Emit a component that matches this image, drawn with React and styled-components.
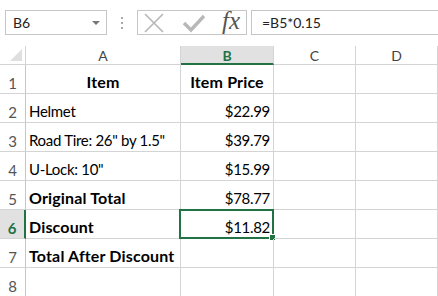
import React from 'react';
import styled, { createGlobalStyle } from 'styled-components';

const GREEN = '#217346';
const LINE = '#d4d4d4';

const Global = createGlobalStyle`
  html, body { margin: 0; padding: 0; background: #fff; overflow: hidden; }
  body { font-family: Lato, "Open Sans", sans-serif; }
`;

const Page = styled.div`
  width: 438px;
  height: 296px;
  overflow: hidden;
  background: #fff;
`;

const FormulaBar = styled.div`
  display: flex;
  align-items: center;
  height: 25px;
  padding: 10px 0 11px 5px;
`;

const NameBox = styled.div`
  box-sizing: border-box;
  width: 102px;
  height: 25px;
  border: 1px solid #c6c6c6;
  display: flex;
  align-items: center;
  justify-content: space-between;
  padding: 0 6px 0 7px;
  font-size: 14px;
  color: #222;
`;

const Caret = styled.span`
  width: 0;
  height: 0;
  border-left: 4px solid transparent;
  border-right: 4px solid transparent;
  border-top: 4px solid #777;
  margin-top: 1px;
`;

const Grip = styled.div`
  width: 30px;
  display: flex;
  justify-content: center;
  svg { display: block; }
`;

const Buttons = styled.div`
  box-sizing: border-box;
  width: 110px;
  height: 25px;
  border: 1px solid #c6c6c6;
  display: flex;
  align-items: center;
  padding: 0 0 0 5px;
  gap: 17px;
`;

const Fx = styled.span`
  font-family: "Liberation Serif", serif;
  font-style: italic;
  font-size: 25px;
  line-height: 1;
  color: #555;
  margin-left: -1px;
  margin-top: -4px;
`;

const Input = styled.div`
  box-sizing: border-box;
  flex: 1;
  height: 25px;
  margin-left: 4px;
  border: 1px solid #c6c6c6;
  border-right: none;
  display: flex;
  align-items: center;
  padding-left: 10px;
  font-size: 14px;
  color: #222;
`;

const Sheet = styled.div`
  display: grid;
  grid-template-columns: 26px 155px 93px 82px 82px;
  grid-template-rows: 19px repeat(8, 29px);
`;

const Corner = styled.div`
  box-sizing: border-box;
  border-right: 1px solid ${LINE};
  border-bottom: 1px solid ${LINE};
  position: relative;
  &::after {
    content: '';
    position: absolute;
    right: 3px;
    bottom: 3px;
    width: 0;
    height: 0;
    border-left: 12px solid transparent;
    border-bottom: 12px solid #dfdfdf;
  }
`;

const ColHead = styled.div`
  box-sizing: border-box;
  display: flex;
  align-items: center;
  justify-content: center;
  font-size: 14px;
  color: ${p => (p.$active ? GREEN : '#444')};
  font-weight: ${p => (p.$active ? 700 : 400)};
  background: ${p => (p.$active ? '#e1e1e1' : '#fff')};
  border-right: 1px solid ${LINE};
  border-bottom: ${p => (p.$active ? `2px solid ${GREEN}` : `1px solid ${LINE}`)};
  padding-top: ${p => (p.$active ? '1px' : '0')};
`;

const RowHead = styled.div`
  box-sizing: border-box;
  display: flex;
  align-items: flex-end;
  justify-content: center;
  padding-bottom: 1px;
  font-size: 15px;
  color: ${p => (p.$active ? GREEN : '#555')};
  font-weight: ${p => (p.$active ? 700 : 400)};
  background: ${p => (p.$active ? '#e1e1e1' : '#fff')};
  border-right: ${p => (p.$active ? `2px solid ${GREEN}` : `1px solid #c6c6c6`)};
  border-bottom: 1px solid ${LINE};
`;

const Cell = styled.div`
  box-sizing: border-box;
  position: relative;
  display: flex;
  align-items: flex-end;
  justify-content: ${p => p.$align || 'flex-start'};
  padding: 0 3px 2px 3px;
  font-size: ${p => (p.$bold ? '16px' : '15px')};
  letter-spacing: ${p => (p.$bold ? '0.15px' : '-0.3px')};
  color: #000;
  font-weight: ${p => (p.$bold ? 700 : 400)};
  white-space: nowrap;
  border-right: 1px solid ${LINE};
  border-bottom: 1px solid ${LINE};
`;

const Selection = styled.div`
  position: absolute;
  left: -2px;
  top: -1px;
  right: -1px;
  bottom: -1px;
  border: 2px solid ${GREEN};
  pointer-events: none;
  &::after {
    content: '';
    position: absolute;
    right: -4px;
    bottom: -4px;
    width: 5px;
    height: 5px;
    background: ${GREEN};
    border: 1px solid #fff;
  }
`;

const CrossIcon = () => (
  <svg width="22" height="20" viewBox="0 0 22 20">
    <path d="M2 1 L20 19 M20 1 L2 19" stroke="#b8b8b8" strokeWidth="1.7" fill="none" />
  </svg>
);

const CheckIcon = () => (
  <svg width="24" height="20" viewBox="0 0 24 20">
    <path d="M2 10 L9 17 L22 3" stroke="#b8b8b8" strokeWidth="3.4" fill="none" />
  </svg>
);

const rows = [
  { a: 'Item', b: 'Item Price', head: true },
  { a: 'Helmet', b: '$22.99' },
  { a: 'Road Tire: 26" by 1.5"', b: '$39.79' },
  { a: 'U-Lock: 10"', b: '$15.99' },
  { a: 'Original Total', b: '$78.77', bold: true },
  { a: 'Discount', b: '$11.82', bold: true, active: true },
  { a: 'Total After Discount', b: '', bold: true },
  { a: '', b: '' },
];

export default function App() {
  return (
    <Page>
      <Global />
      <FormulaBar>
        <NameBox>
          <span>B6</span>
          <Caret />
        </NameBox>
        <Grip>
          <svg width="2" height="12" viewBox="0 0 2 12">
            <rect x="0" y="0" width="2" height="2" fill="#a8a8a8" />
            <rect x="0" y="5" width="2" height="2" fill="#a8a8a8" />
            <rect x="0" y="10" width="2" height="2" fill="#a8a8a8" />
          </svg>
        </Grip>
        <Buttons>
          <CrossIcon />
          <CheckIcon />
          <Fx>fx</Fx>
        </Buttons>
        <Input>=B5*0.15</Input>
      </FormulaBar>
      <Sheet>
        <Corner />
        <ColHead>A</ColHead>
        <ColHead $active>B</ColHead>
        <ColHead>C</ColHead>
        <ColHead>D</ColHead>
        {rows.map((r, i) => (
          <React.Fragment key={i}>
            <RowHead $active={r.active}>{i + 1}</RowHead>
            <Cell $bold={r.bold || r.head} $align={r.head ? 'center' : 'flex-start'}>{r.a}</Cell>
            <Cell $bold={r.head} $align={r.head ? 'center' : 'flex-end'}>
              {r.b}
              {r.active && <Selection />}
            </Cell>
            <Cell />
            <Cell />
          </React.Fragment>
        ))}
      </Sheet>
    </Page>
  );
}
